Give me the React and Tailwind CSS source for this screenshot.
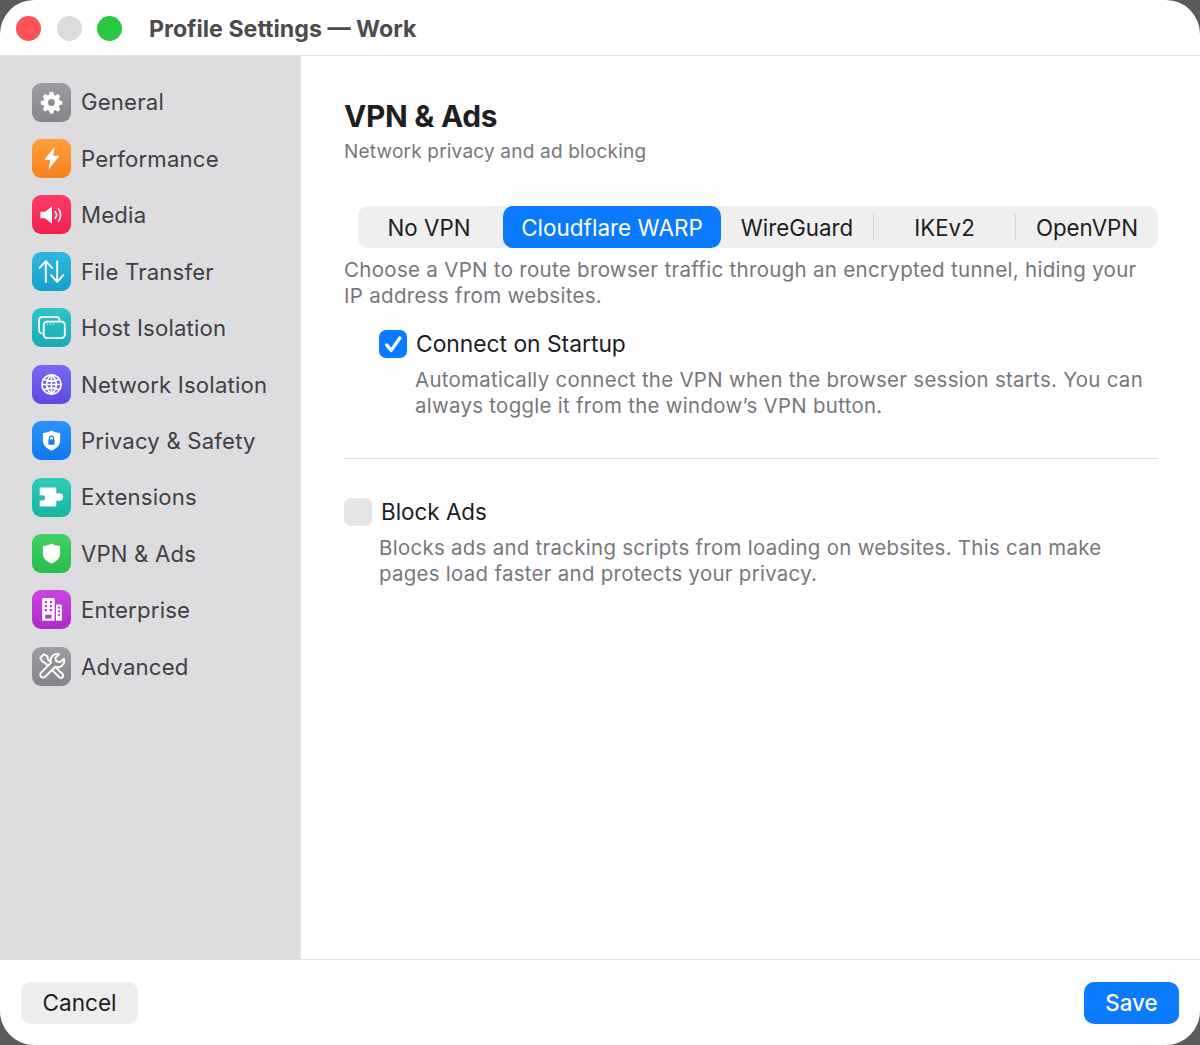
import React from "react";

const Gear = () => (
  <svg viewBox="0 0 24 24" className="w-[25px] h-[25px]" fill="#fff"><path fillRule="evenodd" d="M10.3 2h3.4l.5 2.6 1.7.7 2.2-1.5 2.4 2.4-1.5 2.2.7 1.7 2.6.5v3.4l-2.6.5-.7 1.7 1.5 2.2-2.4 2.4-2.2-1.5-1.7.7-.5 2.6h-3.4l-.5-2.6-1.7-.7-2.2 1.5-2.4-2.4 1.5-2.2-.7-1.7-2.6-.5v-3.4l2.6-.5.7-1.7-1.5-2.2 2.4-2.4 2.2 1.5 1.7-.7zM12 8.6a3.4 3.4 0 1 0 0 6.8 3.4 3.4 0 0 0 0-6.8z"/></svg>
);
const Bolt = () => (
  <svg viewBox="0 0 24 24" className="w-[26px] h-[26px]" fill="#fff"><path d="M14.5 1.5 4.8 13.6h5.6L8.8 22.5 19 10h-6z"/></svg>
);
const Speaker = () => (
  <svg viewBox="0 0 28 24" className="w-[26px] h-[24px]" fill="none"><path d="M1.5 8.5h5L14 2.5v19l-7.5-6h-5z" fill="#fff"/><path d="M17.5 8.5c1.6 2 1.6 5 0 7M21 5.5c3 3.6 3 9.4 0 13" stroke="#fff" strokeWidth="1.8" strokeLinecap="round"/></svg>
);
const Arrows = () => (
  <svg viewBox="0 0 28 28" className="w-[29px] h-[29px]" fill="none" stroke="#fff" strokeWidth="1.9" strokeLinecap="round" strokeLinejoin="round"><path d="M8.5 24V4M2.5 10.5l6-6.5 6 6.5M19.5 4v20M13.5 17.5l6 6.5 6-6.5"/></svg>
);
const Windows = () => (
  <svg viewBox="0 0 28 28" className="w-[31px] h-[31px]" fill="none" stroke="#fff" strokeWidth="1.6"><path d="M6 19.5c-2 0-3.2-1.2-3.2-3V7.5c0-2 1.2-3.2 3.2-3.2h12c2 0 3.2 1.2 3.2 3v1"/><rect x="7" y="8.6" width="19" height="15" rx="3"/><path d="M10 11h.9M12.500 11h.9M15 11h.9" strokeWidth="1.2"/></svg>
);
const GlobeFull = () => (
  <svg viewBox="0 0 24 24" className="w-[23px] h-[23px]" fill="none" stroke="#fff" strokeWidth="1.800"><circle cx="12" cy="12" r="10" fill="#6b5bec" /><path d="M12 2c-3.300 2.700-5 6-5 10s1.700 7.300 5 10c3.300-2.700 5-6 5-10s-1.700-7.300-5-10zM12 2v20M2 12h20M3.800 6.500c5 2.400 11.400 2.400 16.400 0M3.800 17.500c5-2.400 11.400-2.400 16.400 0"/></svg>
);
const LockShield = () => (
  <svg viewBox="0 0 24 24" className="w-[23px] h-[23px]"><path d="M12 1.5c3 1.6 5.6 2.3 9 2.6v8c0 5-3.6 8.400-9 10.400-5.400-2-9-5.400-9-10.400v-8c3.400-.3 6-1 9-2.600z" fill="#fff"/><path d="M9.300 11V9.500a2.700 2.700 0 0 1 5.400 0V11h.5v5.500H8.800V11zM10.500 11h3V9.500a1.500 1.500 0 0 0-3 0z" fill="#1480f5" fillRule="evenodd"/></svg>
);
const Puzzle = () => (
  <svg viewBox="0 0 28 24" className="w-[29px] h-[24px]" fill="#fff"><path d="M3.500 2.500h14c.8 0 1.300.5 1.300 1.300v4.500h3.200a3.500 3.500 0 0 1 0 7.400h-3.200v4.500c0 .8-.5 1.300-1.300 1.300h-14c-.8 0-1.300-.5-1.300-1.300v-4.800h2.800a2.600 2.600 0 0 0 0-5.200H2.200V3.800c0-.8.5-1.300 1.300-1.300z"/></svg>
);
const Shield = () => (
  <svg viewBox="0 0 24 24" className="w-[23px] h-[23px]"><path d="M12 1.500c3 1.600 5.600 2.300 9 2.600v8c0 5-3.600 8.400-9 10.400-5.400-2-9-5.400-9-10.400v-8c3.400-.3 6-1 9-2.600z" fill="#fff"/></svg>
);
const Building = () => (
  <svg viewBox="0 0 24 28" className="w-[22px] h-[25px]"><path fillRule="evenodd" fill="#fff" d="M1 2.500C1 1.700 1.700 1 2.500 1h11c.8 0 1.500.7 1.500 1.500v24H1zM4 4.500v2.500h2.500V4.500zM9.500 4.500v2.500H12V4.500zM4 9v2.500h2.500V9zM9.500 9v2.500H12V9zM4 13.500V16h2.500v-2.500zM9.500 13.500V16H12v-2.500zM4.500 20v4h7v-4z"/><path fillRule="evenodd" fill="#fff" d="M16.500 8.500H22c.6 0 1 .4 1 1v17h-6.500zM18.500 11v2h2.500v-2zM18.500 15v2h2.500v-2zM18.500 19v2h2.500v-2z"/></svg>
);
const Tools = () => (
  <svg viewBox="0 0 28 28" className="w-[30px] h-[30px]" fill="none" stroke="#fff" strokeWidth="1.800" strokeLinejoin="round" strokeLinecap="round"><path d="M3 6.500 6.500 3l3.200 2 .6 3 13.500 13.500a2.100 2.100 0 0 1-3 3L7.300 11 5 9.700z"/><path d="M25 7.200l-3.600 3.300-3.400-.9-.9-3.300L20.600 3a6 6 0 0 0-7.400 7.800L3.800 20.200a2.600 2.600 0 0 0 0 3.800 2.600 2.600 0 0 0 3.800 0l9.400-9.300A6 6 0 0 0 25 7.200z" fill="#8e8e93"/></svg>
);

const items = [
  ["General", "bg-gradient-to-b from-[#9c9ca1] to-[#85858a]", <Gear />],
  ["Performance", "bg-gradient-to-b from-[#ff9f38] to-[#f9801f]", <Bolt />],
  ["Media", "bg-gradient-to-b from-[#ff3a68] to-[#f31f4a]", <Speaker />],
  ["File Transfer", "bg-gradient-to-b from-[#2fb8dc] to-[#12a2cc]", <Arrows />],
  ["Host Isolation", "bg-gradient-to-b from-[#30c4ca] to-[#18aab4]", <Windows />],
  ["Network Isolation", "bg-gradient-to-b from-[#7a68f5] to-[#5b4be0]", <GlobeFull />],
  ["Privacy & Safety", "bg-gradient-to-b from-[#2b93fb] to-[#0f78f0]", <LockShield />],
  ["Extensions", "bg-gradient-to-b from-[#2fcdb8] to-[#14b3a0]", <Puzzle />],
  ["VPN & Ads", "bg-gradient-to-b from-[#3fd266] to-[#27bb4c]", <Shield />],
  ["Enterprise", "bg-gradient-to-b from-[#c945e0] to-[#ad2dc6]", <Building />],
  ["Advanced", "bg-gradient-to-b from-[#9c9ca1] to-[#85858a]", <Tools />],
];

const Sep = () => <span className="w-px h-[26px] self-center bg-[#d4d4d4] shrink-0" />;

const body = "text-[20.500px] leading-[26px] text-[#77777a] tracking-[0.3px]";
const bodySm = "text-[20.420px] leading-[26px] text-[#77777a] tracking-[0.3px]";
const tab = "flex items-center justify-center pt-[2px] text-[22.300px] text-[#1d1d1f]";

export default function App() {
  return (
    <div className="w-[1200px] h-[1045px] bg-[#5b5b5d] overflow-hidden font-['Inter','Liberation_Sans',sans-serif]">
      <div className="w-full h-full bg-white rounded-[34px] overflow-hidden flex flex-col">
        <header className="h-[56px] shrink-0 flex items-center pl-[16px] pt-[2px] border-b border-[#e2e2e2]">
          <div className="flex items-center gap-[15.500px]">
            <span className="w-[25px] h-[25px] rounded-full bg-[#ff5257]" />
            <span className="w-[25px] h-[25px] rounded-full bg-[#dcdcdc]" />
            <span className="w-[25px] h-[25px] rounded-full bg-[#28c840]" />
          </div>
          <h1 className="ml-[27px] pt-[1px] text-[23.200px] font-bold text-[#4c4c4e]">Profile Settings — Work</h1>
        </header>

        <div className="flex-1 flex min-h-0">
          <aside className="w-[301px] shrink-0 bg-[#dddde0] border-r border-[#e6e6e6] pt-[26px] pl-[20px] pr-[16px]">
            <nav className="flex flex-col gap-[16.450px]">
              {items.map(([label, bg, icon]) => (
                <div key={label} className={`h-[40px] flex items-center gap-[10px] pl-[12px] ${label === "VPN & Ads" ? "bg-[#dcdcde] shadow-[0_5px_0_#dcdcde,0_-5px_0_#dcdcde]" : ""}`}>
                  <span className={`w-[39px] h-[39px] rounded-[9px] flex items-center justify-center shrink-0 ${bg}`}>{icon}</span>
                  <span className="pt-[2px] text-[22.150px] text-[#3f3f44] tracking-[0.2px]">{label}</span>
                </div>
              ))}
            </nav>
          </aside>

          <main className="flex-1 pl-[43px] pr-[42px] pt-[41px]">
            <h2 className="text-[29.900px] leading-[38px] font-bold text-[#1f1f21] tracking-[-0.3px]">VPN &amp; Ads</h2>
            <p className="mt-[3px] text-[19px] leading-[28px] text-[#77777a] tracking-[0.2px]">Network privacy and ad blocking</p>

            <div className="mt-[40px] ml-[14px] h-[42px] flex bg-[#efeff0] rounded-[10px]">
              <div className={`${tab} w-[145px] pr-[3px]`}>No VPN</div>
              <div className={`${tab} w-[218px] bg-[#0a7aff] !text-white rounded-[10px] !text-[22.500px]`}>Cloudflare WARP</div>
              <div className={`${tab} w-[152px]`}>WireGuard</div>
              <Sep />
              <div className={`${tab} w-[141px]`}>IKEv2</div>
              <Sep />
              <div className={`${tab} w-[142px]`}>OpenVPN</div>
            </div>

            <p className={`mt-[9px] ${body}`}>Choose a VPN to route browser traffic through an encrypted tunnel, hiding your IP address from websites.</p>

            <div className="mt-[21px] ml-[35px] flex items-center gap-[9px]">
              <span className="w-[28px] h-[28px] rounded-[7px] bg-[#0a7aff] flex items-center justify-center">
                <svg viewBox="0 0 24 24" className="w-[22px] h-[22px]" fill="none" stroke="#fff" strokeWidth="3.600" strokeLinecap="round" strokeLinejoin="round"><path d="M5 13l5 6L19.500 5.500"/></svg>
              </span>
              <span className="text-[22.800px] leading-[28px] text-[#1d1d1f]">Connect on Startup</span>
            </div>
            <p className={`mt-[9px] ml-[71px] ${bodySm}`}>Automatically connect the VPN when the browser session starts. You can always toggle it from the window’s VPN button.</p>

            <div className="mt-[39px] h-px bg-[#dcdcdc]" />

            <div className="mt-[39px] flex items-center gap-[9px]">
              <span className="w-[28px] h-[28px] rounded-[7px] bg-[#e6e6e7]" />
              <span className="text-[22.400px] leading-[28px] text-[#1d1d1f]">Block Ads</span>
            </div>
            <p className={`mt-[9px] ml-[35px] ${bodySm}`}>Blocks ads and tracking scripts from loading on websites. This can make pages load faster and protects your privacy.</p>
          </main>
        </div>

        <footer className="h-[86px] shrink-0 border-t border-[#e2e2e2] flex items-center justify-between pl-[21px] pr-[21px]">
          <button className="w-[117px] h-[42px] rounded-[10px] bg-[#ededee] text-[22.600px] text-[#1d1d1f]">Cancel</button>
          <button className="w-[95px] h-[42px] rounded-[10px] bg-[#0a7aff] text-[22.400px] font-medium text-white">Save</button>
        </footer>
      </div>
    </div>
  );
}
